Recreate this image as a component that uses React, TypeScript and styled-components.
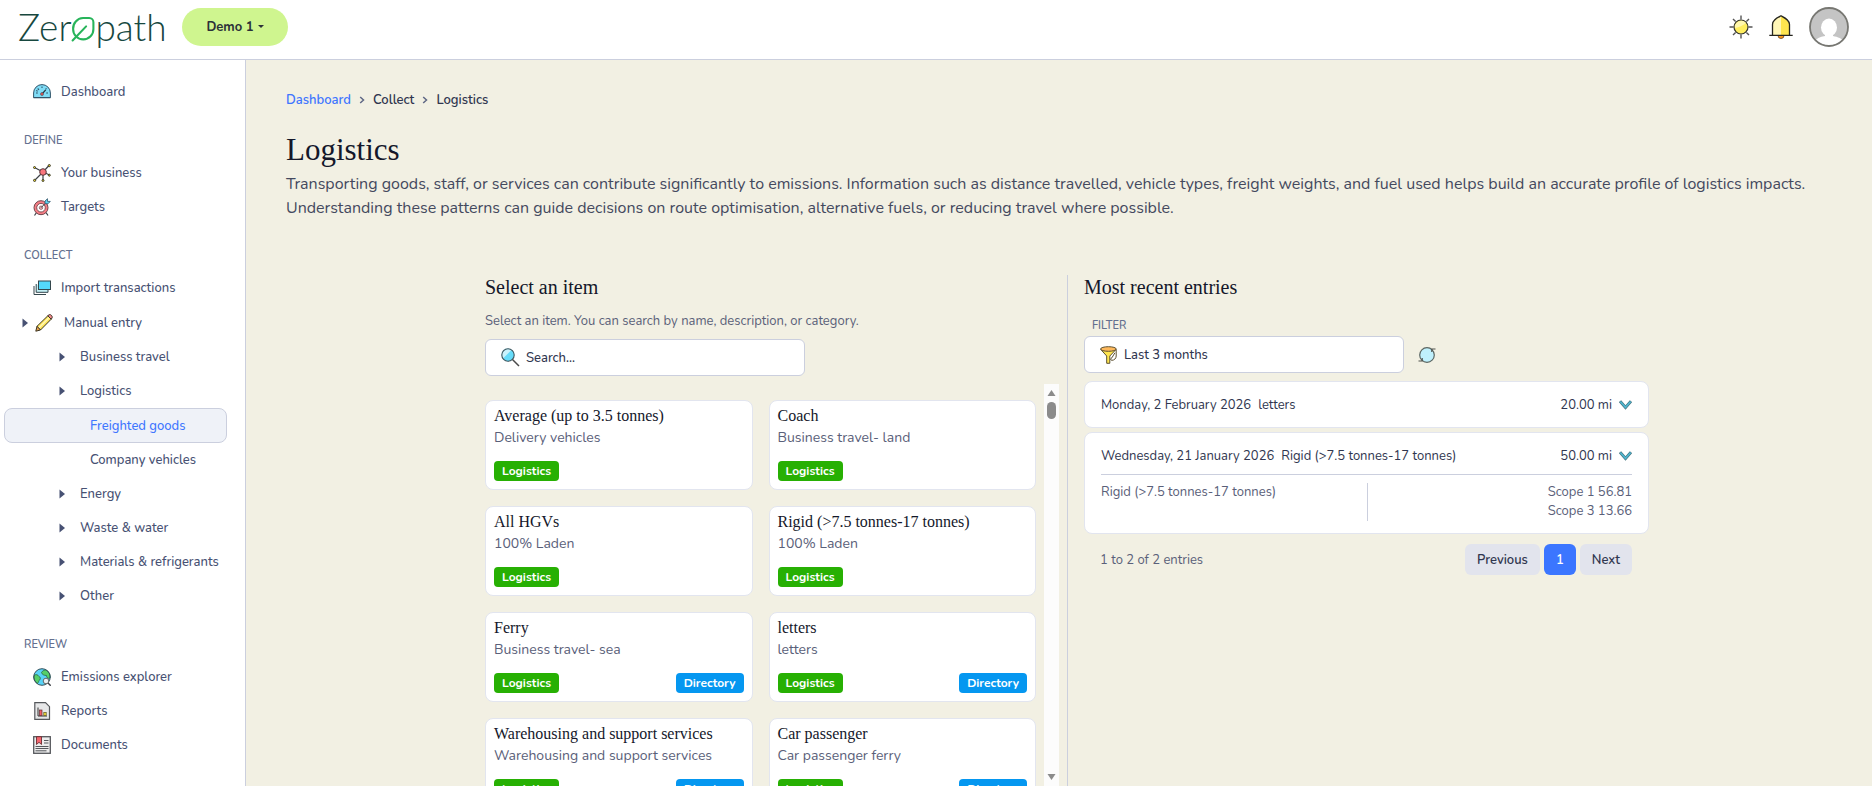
import React from 'react';
import styled, { createGlobalStyle, css } from 'styled-components';

const color = {
  page: '#f2f0e3',
  white: '#ffffff',
  line: '#cbcfde',
  cardLine: '#e2e5ef',
  ink: '#14172a',
  strong: '#30364f',
  body: '#44495e',
  muted: '#5a6079',
  nav: '#475173',
  navTitle: '#64708f',
  link: '#3f76ff',
  lime: '#cff58f',
  green: '#27b003',
  blue: '#0597f0',
};

const sans = `Nunito, Roboto, sans-serif`;
const serif = `"Times New Roman", "Liberation Serif", serif`;

const GlobalStyle = createGlobalStyle`
  *, *::before, *::after { box-sizing: border-box; }
  body { margin: 0; background: ${color.page}; color: ${color.body}; font: 400 13px/20px ${sans}; }
  h1, h2, h3, p, ul { margin: 0; padding: 0; font-weight: 400; }
  ul { list-style: none; }
  button, input, select { font: inherit; color: inherit; }
  button { border: 0; background: none; padding: 0; cursor: pointer; }
  a { color: inherit; text-decoration: none; }
  svg { display: block; flex: none; }
`;

/* ---------- shell ---------- */

const Shell = styled.div`
  display: flex;
  flex-direction: column;
  height: 100vh;
`;

const TopBar = styled.header`
  display: flex;
  align-items: center;
  flex: none;
  height: 60px;
  padding: 0 23px 6px 18px;
  background: ${color.white};
  border-bottom: 1px solid ${color.line};
`;

const Logo = styled.a`
  display: flex;
  align-items: center;
  width: 145px;
  margin-right: 19px;
  color: #17483f;
  font: 300 37px/46px Lato, sans-serif;
  svg { margin-top: 4px; }
`;

const AccountButton = styled.button`
  display: flex;
  align-items: center;
  justify-content: center;
  gap: 4px;
  width: 106px;
  height: 38px;
  border-radius: 19px;
  background: ${color.lime};
  color: #2b3038;
  font-weight: 700;
`;

const Caret = styled.span`
  border: 3px solid transparent;
  border-top-color: currentColor;
  border-bottom: 0;
`;

const TopActions = styled.div`
  display: flex;
  align-items: center;
  gap: 16px;
  margin-left: auto;
`;

const Body = styled.div`
  display: flex;
  flex: 1;
  min-height: 0;
`;

/* ---------- sidebar ---------- */

const Sidebar = styled.nav`
  flex: none;
  width: 246px;
  padding: 15px 18px 0 4px;
  overflow: hidden;
  background: ${color.white};
  border-right: 1px solid ${color.line};
`;

const NavTitle = styled.h2`
  margin: 23px 0 6px;
  padding-left: 20px;
  color: ${color.navTitle};
  font: 600 11px/18px ${sans};
  text-transform: uppercase;
`;

const rowStyle = css`
  display: flex;
  align-items: center;
  width: 100%;
  height: 34px;
  border-radius: 8px;
  color: ${color.nav};
  font-weight: 500;
  white-space: nowrap;
`;

const NavLink = styled.a`
  ${rowStyle}
  gap: 10px;
  padding-left: 29px;
`;

const GroupButton = styled.button`
  ${rowStyle}
  height: 35px;
  gap: 6px;
  padding-left: 18px;
  svg + svg { margin-right: 5px; }
`;

const SubButton = styled.button`
  ${rowStyle}
  gap: 14px;
  padding-left: 55px;
`;

const LeafLink = styled.a<{ $active?: boolean }>`
  ${rowStyle}
  padding-left: 86px;
  ${(p) =>
    p.$active &&
    css`
      height: 35px;
      padding-left: 85px;
      border: 1px solid ${color.line};
      background: #eff2f8;
      color: ${color.link};
    `}
`;

/* ---------- page head ---------- */

const Main = styled.main`
  display: flex;
  flex-direction: column;
  flex: 1;
  min-width: 0;
  padding: 30px 40px 0;
`;

const Crumbs = styled.nav`
  display: flex;
  align-items: center;
  gap: 8px;
  color: ${color.strong};
  font-weight: 600;
  a { color: ${color.link}; }
`;

const PageTitle = styled.h1`
  margin-top: 20px;
  color: ${color.ink};
  font: 400 31px/40px ${serif};
`;

const Lead = styled.p`
  margin-top: 2px;
  font-size: 16px;
  line-height: 24px;
`;

const Columns = styled.div`
  display: grid;
  grid-template-columns: 1fr 1fr;
  flex: 1;
  min-height: 0;
  width: 100%;
  max-width: 1180px;
  margin: 55px auto 0;
  padding-left: 16px;
`;

const Picker = styled.section`
  display: flex;
  flex-direction: column;
  min-height: 0;
  padding-right: 8px;
`;

const Recent = styled.section`
  padding-left: 16px;
  border-left: 1px solid ${color.line};
`;

const SectionTitle = styled.h2`
  color: ${color.ink};
  font: 400 20px/24px ${serif};
`;

const Hint = styled.p`
  margin: 12px 0 8px;
  color: ${color.muted};
`;

const Field = styled.label`
  display: flex;
  align-items: center;
  flex: none;
  gap: 6px;
  width: 320px;
  height: 37px;
  padding: 0 15px;
  border: 1px solid ${color.line};
  border-radius: 6px;
  background: ${color.white};
  color: ${color.strong};
  input, select {
    flex: 1;
    min-width: 0;
    padding: 0;
    border: 0;
    outline: 0;
    background: transparent;
    font-weight: 500;
    appearance: none;
  }
  input::placeholder { color: ${color.strong}; opacity: 1; }
`;

/* ---------- item list ---------- */

const ListFrame = styled.div`
  display: flex;
  flex: 1;
  gap: 8px;
  min-height: 0;
  margin-top: 8px;
`;

const ItemGrid = styled.ul`
  display: grid;
  grid-template-columns: 1fr 1fr;
  grid-auto-rows: max-content;
  gap: 16px;
  flex: 1;
  padding-top: 16px;
  overflow-y: auto;
  scrollbar-width: none;
`;

const ItemCard = styled.li`
  padding: 4px 8px 8px;
  border: 1px solid ${color.cardLine};
  border-radius: 8px;
  background: ${color.white};
  h3 { color: ${color.ink}; font: 400 16px/22px ${serif}; }
  p { color: ${color.muted}; font-size: 14px; line-height: 22px; }
`;

const Tags = styled.div`
  display: flex;
  justify-content: space-between;
  margin-top: 12px;
`;

const Tag = styled.span<{ $tone: 'green' | 'blue' }>`
  padding: 0 8px;
  border-radius: 4px;
  background: ${(p) => color[p.$tone]};
  color: ${color.white};
  font: 700 12px/20px ${sans};
`;

const ScrollTrack = styled.div`
  display: flex;
  flex-direction: column;
  align-items: center;
  flex: none;
  width: 15px;
  padding: 6px 0;
  background: #fcfcfc;
`;

const ScrollThumb = styled.div`
  width: 9px;
  height: 17px;
  margin: 6px 0 auto;
  border-radius: 5px;
  background: #8b8b8b;
`;

/* ---------- recent entries ---------- */

const FilterLabel = styled.label`
  display: block;
  margin: 18px 0 1px 8px;
  color: ${color.navTitle};
  font: 600 11px/18px ${sans};
  text-transform: uppercase;
`;

const FilterRow = styled.div`
  display: flex;
  align-items: center;
  gap: 14px;
  margin-bottom: 8px;
`;

const EntryList = styled.ul`
  display: grid;
  gap: 4px;
`;

const EntryCard = styled.li`
  padding: 12px 16px;
  border: 1px solid ${color.cardLine};
  border-radius: 8px;
  background: ${color.white};
`;

const EntryHead = styled.div`
  display: flex;
  align-items: center;
  gap: 7px;
  height: 21px;
  color: ${color.strong};
  strong { margin-left: auto; font-weight: 400; }
`;

const EntryDetail = styled.div`
  display: grid;
  grid-template-columns: 1fr 1fr;
  margin-top: 8px;
  padding: 8px 0 0;
  border-top: 1px solid ${color.line};
  color: ${color.muted};
  line-height: 19px;
`;

const Scopes = styled.ul`
  border-left: 1px solid ${color.line};
  text-align: right;
`;

const Pager = styled.footer`
  display: flex;
  align-items: center;
  gap: 4px;
  padding: 10px 17px 10px 16px;
  span { margin-right: auto; color: ${color.muted}; }
`;

const PageButton = styled.button<{ $current?: boolean }>`
  height: 31px;
  padding: 0 12px;
  border-radius: 6px;
  background: ${(p) => (p.$current ? '#3b76ff' : '#e2e4ed')};
  color: ${(p) => (p.$current ? color.white : color.strong)};
  font-weight: 600;
`;

/* ---------- drawings ---------- */

const dark = '#3b3f45';

const LeafMark = () => (
  <svg width="24" height="26" viewBox="0 0 23 25" fill="none" stroke="#27b45a" strokeWidth="2" strokeLinecap="round">
    <path d="M11.500 2H17.500A4 4 0 0 1 21.500 6V12.500A9.700 9.700 0 0 1 11.800 22.500A9.700 9.700 0 0 1 2 12.500A10 10 0 0 1 11.500 2Z" />
    <path d="M1.500 23.500L14.500 10" />
  </svg>
);

const Sun = () => (
  <svg width="24" height="24" viewBox="0 0 24 24">
    <g stroke="#555" strokeWidth="1.4">
      <path d="M12 .5v4M12 19.500v4M.5 12h4M19.500 12h4M4 4l2.600 2.600M17.400 17.400L20 20M4 20l2.600-2.600M17.400 6.600L20 4" />
    </g>
    <circle cx="12" cy="12" r="7" fill="#ffee5f" stroke="#33332b" strokeWidth="1.2" />
    <path d="M6 13a6.300 6.300 0 0 1 11-5A22 22 0 0 1 6 13Z" fill="#fff7ae" />
  </svg>
);

const Bell = () => (
  <svg width="24" height="24" viewBox="0 0 24 24">
    <path d="M9 20.500a3 3 0 0 0 6 0Z" fill="#ff9b1e" stroke="#66401a" strokeWidth=".8" />
    <path d="M3.500 20.300V9.500C3.500 5 8 3 12 .8C16 3 20.500 5 20.500 9.500V20.300Z" fill="#ffe54e" />
    <path d="M3.500 20.300V9.500C3.500 5 8 3 12 .8V20.300Z" fill="#fff6b6" />
    <path d="M.3 20.300H23.700M3.500 20V9.500C3.500 5 8 3 12 .8C16 3 20.500 5 20.500 9.500V20" fill="none" stroke="#25251f" strokeWidth="1.300" />
  </svg>
);

const Avatar = () => (
  <svg width="40" height="40" viewBox="0 0 40 40">
    <clipPath id="face"><circle cx="20" cy="20" r="18.500" /></clipPath>
    <circle cx="20" cy="20" r="19" fill="#c4c4c4" />
    <g clipPath="url(#face)" fill="#fff">
      <ellipse cx="20" cy="20.500" rx="8" ry="9" />
      <path d="M16 26h8v3c5 1 9 2.500 11 6v5H5v-5c2-3.500 6-5 11-6Z" />
    </g>
    <circle cx="20" cy="20" r="19" fill="none" stroke="#777772" strokeWidth="1.800" />
  </svg>
);

const Gauge = () => (
  <svg width="18" height="18" viewBox="0 0 18 18">
    <path d="M.6 14.600V10a8.400 8.400 0 0 1 16.800 0v4.600Z" fill="#7fdcf6" stroke="#31546a" />
    <path d="M3 10h1.800M13.200 10H15M4.700 5.500L6 6.800M9 3.500V5M13.500 5.300l-1 1M3.200 7.500l1.500.7" stroke="#31546a" strokeWidth="1.100" />
    <path d="M9 11L12.700 6.800" stroke="#24333d" strokeWidth="1.200" />
    <circle cx="9" cy="11" r="1.500" fill="#e8524d" stroke="#31546a" strokeWidth=".6" />
    <path d="M.6 14.600H17.400" stroke="#31546a" strokeWidth="1.200" />
  </svg>
);

const Network = () => (
  <svg width="18" height="18" viewBox="0 0 18 18">
    <path d="M10 8L1.500 3.500M10 8L16 1.500M10 8L16.500 11M10 8V16M10 8L1.500 16.500" stroke={dark} strokeWidth="1.200" />
    <circle cx="10" cy="8" r="3.300" fill="#f9757d" stroke="#59393d" />
    <g fill="#e9d636" stroke="#302f22" strokeWidth=".9">
      <circle cx="1.500" cy="3.500" r="1" /><circle cx="16.300" cy="1.600" r="1.100" />
      <circle cx="16.300" cy="11.200" r="1" /><circle cx="10" cy="16.500" r="1" /><circle cx="1.600" cy="16.400" r="1.100" />
    </g>
  </svg>
);

const Target = () => (
  <svg width="18" height="18" viewBox="0 0 18 18">
    <path d="M3.500 14.500L1.500 17.500M13 14.500l2 3" stroke={dark} strokeWidth="1.200" />
    <circle cx="8" cy="9.700" r="7" fill="#f77d85" stroke="#70474c" />
    <circle cx="8" cy="9.700" r="4.300" fill="#fff" stroke="#70474c" strokeWidth=".9" />
    <circle cx="8" cy="9.700" r="1.700" fill="#f9b7bb" stroke="#70474c" strokeWidth=".7" />
    <path d="M8 9.700L13.500 4.200" stroke={dark} />
    <path d="M12 5.700V3L14.500.7V3.400H17.300L15 5.800Z" fill="#5dd5f5" stroke="#31546a" strokeWidth=".8" />
  </svg>
);

const Stack = () => (
  <svg width="18" height="18" viewBox="0 0 18 18" stroke="#34474d">
    <path d="M1 7v8.500h12" fill="none" />
    <path d="M3.200 5v8.300H15V11" fill="#c5f0f6" />
    <rect x="5.500" y="2" width="12" height="8.500" fill="#54d9fb" />
  </svg>
);

const Pencil = () => (
  <svg width="18" height="18" viewBox="0 0 18 18" stroke="#3b3524" strokeWidth="1" strokeLinejoin="round">
    <path d="M2 12.300L12.800 1.800L16.200 5.200L5.500 16Z" fill="#ffe659" />
    <path d="M3.700 14L14.300 3.500" stroke="#fff7bd" strokeWidth="1.400" />
    <path d="M2 12.300L.8 17.200L5.500 16Z" fill="#e8a14c" />
    <path d="M12.800 1.800L14 .8C15.500-.2 18 2.300 17 4L16.200 5.200Z" fill="#f58b91" />
  </svg>
);

const Globe = () => (
  <svg width="18" height="18" viewBox="0 0 18 18">
    <circle cx="9" cy="9" r="8.300" fill="#58d3f7" />
    <path d="M1 7.500C2.500 6 5 6.500 6 8.500C8 9.500 7.500 11.500 6 12.500C5.500 14 5 15 4.500 15.500C1.500 13.500.5 10.500 1 7.500ZM8.500 4.500C9.500 2.500 12 1.800 13 2C16 3.500 17.500 7 17 10C15 11 13.500 9.500 13.500 7.500C11 7.500 9 6.500 8.500 4.500Z" fill="#55cf68" stroke="#2b6740" strokeWidth=".8" />
    <circle cx="9" cy="9" r="8.300" fill="none" stroke="#33505c" />
    <path d="M14.800 14.800L17.700 17.700" stroke={dark} strokeWidth="1.400" />
    <circle cx="13" cy="13" r="2.800" fill="#e9eff0" stroke="#666" />
  </svg>
);

const Report = () => (
  <svg width="18" height="18" viewBox="0 0 18 18" stroke="#55585c">
    <path d="M1.800.7H12.500L16.500 4.700V17.300H1.800Z" fill="#e6e7e8" strokeWidth="1.200" />
    <path d="M5 5.500V14h9" fill="none" stroke="#333" />
    <rect x="6.500" y="8" width="2.500" height="5.500" fill="#ef5a63" stroke="#642b30" strokeWidth=".7" />
    <rect x="10.800" y="10.500" width="2.400" height="3" fill="#f2dc3b" stroke="#5c5420" strokeWidth=".7" />
  </svg>
);

const Documents = () => (
  <svg width="18" height="18" viewBox="0 0 18 18" stroke="#55585c">
    <rect x=".7" y=".7" width="16.600" height="16.600" fill="#ececec" strokeWidth="1.300" />
    <path d="M11 4.500h4.500M11 7h4.500M2.500 10.500h13M2.500 12.500h13M2.500 14.800h11" fill="none" />
    <path d="M3.500.7H8.500V8.500L6 6.300L3.500 8.500Z" fill="#f4646d" stroke="#6b2e33" strokeWidth=".9" />
  </svg>
);

const Glass = () => (
  <svg width="19" height="19" viewBox="0 0 19 19">
    <circle cx="7" cy="7" r="6.200" fill="#66dcfa" />
    <path d="M2 10.500A6 6 0 0 1 10.500 2Z" fill="#c9f3fd" />
    <circle cx="7" cy="7" r="6.200" fill="none" stroke="#3d555d" strokeWidth="1.100" />
    <path d="M11.500 11.500L18 18" stroke="#4a4a4a" strokeWidth="1.500" />
  </svg>
);

const Funnel = () => (
  <svg width="18" height="18" viewBox="0 0 18 18" stroke="#5c5031">
    <path d="M.8 3.500L6.700 10v7.300H9.800V10L16 3.500Z" fill="#ffe64f" />
    <ellipse cx="8.400" cy="3" rx="7.800" ry="2.300" fill="#ffb95c" />
    <path d="M16.200 3.500V10c0 2.500-2 4.300-4.300 4.300-1.700 0-1.700-2 0-2.500l3-5" fill="none" />
  </svg>
);

const Refresh = () => (
  <svg width="18" height="18" viewBox="0 0 18 18" fill="none" stroke="#5b6662" strokeWidth="1.200">
    <circle cx="9" cy="9" r="7.300" fill="#bff0fc" />
    <path d="M13.800 6V3H17.500M4.200 12V15H.5" stroke="#4e504d" />
  </svg>
);

const Triangle = () => (
  <svg width="7" height="10" viewBox="0 0 7 10"><path d="M.5.5V9.500L6 5Z" fill={color.nav} /></svg>
);

const CrumbArrow = () => (
  <svg width="6" height="8" viewBox="0 0 6 8" fill="none" stroke="#5f6785" strokeWidth="1.500"><path d="M1.200 1L4.500 4L1.200 7" /></svg>
);

const Expand = () => (
  <svg width="13" height="10" viewBox="0 0 13 10" fill="none">
    <path d="M1 1.200L6.500 7.500L12 1.200" stroke="#44707c" strokeWidth="3" />
    <path d="M1.300 1.500L6.500 7.400L11.700 1.500" stroke="#4fb4cd" strokeWidth="1.800" />
  </svg>
);

const ScrollArrow = ({ down = false }: { down?: boolean }) => (
  <svg width="9" height="6" viewBox="0 0 9 6"><path d={down ? 'M.5 0H8.500L4.500 6Z' : 'M.5 6H8.500L4.500 0Z'} fill="#8b8b8b" /></svg>
);

/* ---------- data ---------- */

const items = [
  { name: 'Average (up to 3.5 tonnes)', detail: 'Delivery vehicles' },
  { name: 'Coach', detail: 'Business travel- land' },
  { name: 'All HGVs', detail: '100% Laden' },
  { name: 'Rigid (>7.5 tonnes-17 tonnes)', detail: '100% Laden' },
  { name: 'Ferry', detail: 'Business travel- sea', directory: true },
  { name: 'letters', detail: 'letters', directory: true },
  { name: 'Warehousing and support services', detail: 'Warehousing and support services', directory: true },
  { name: 'Car passenger', detail: 'Car passenger ferry', directory: true },
];

const entries = [
  { date: 'Monday, 2 February 2026', item: 'letters', amount: '20.00 mi', scopes: [] as string[] },
  {
    date: 'Wednesday, 21 January 2026',
    item: 'Rigid (>7.5 tonnes-17 tonnes)',
    amount: '50.00 mi',
    scopes: ['Scope 1 56.81', 'Scope 3 13.66'],
  },
];

const SubGroup = ({ label }: { label: string }) => (
  <SubButton type="button"><Triangle />{label}</SubButton>
);

export default function App() {
  return (
    <Shell>
      <GlobalStyle />
      <TopBar>
        <Logo href="#"><span>Zer</span><LeafMark /><span>path</span></Logo>
        <AccountButton type="button">Demo 1<Caret /></AccountButton>
        <TopActions>
          <button type="button" aria-label="Theme"><Sun /></button>
          <button type="button" aria-label="Notifications"><Bell /></button>
          <button type="button" aria-label="Profile"><Avatar /></button>
        </TopActions>
      </TopBar>
      <Body>
        <Sidebar>
          <NavLink href="#"><Gauge />Dashboard</NavLink>
          <NavTitle>Define</NavTitle>
          <NavLink href="#"><Network />Your business</NavLink>
          <NavLink href="#"><Target />Targets</NavLink>
          <NavTitle>Collect</NavTitle>
          <NavLink href="#"><Stack />Import transactions</NavLink>
          <GroupButton type="button" aria-expanded="true"><Triangle /><Pencil />Manual entry</GroupButton>
          <SubGroup label="Business travel" />
          <SubGroup label="Logistics" />
          <LeafLink href="#" $active>Freighted goods</LeafLink>
          <LeafLink href="#">Company vehicles</LeafLink>
          <SubGroup label="Energy" />
          <SubGroup label="Waste & water" />
          <SubGroup label="Materials & refrigerants" />
          <SubGroup label="Other" />
          <NavTitle>Review</NavTitle>
          <NavLink href="#"><Globe />Emissions explorer</NavLink>
          <NavLink href="#"><Report />Reports</NavLink>
          <NavLink href="#"><Documents />Documents</NavLink>
        </Sidebar>
        <Main>
          <Crumbs>
            <a href="#">Dashboard</a><CrumbArrow /><span>Collect</span><CrumbArrow /><span>Logistics</span>
          </Crumbs>
          <PageTitle>Logistics</PageTitle>
          <Lead>
            Transporting goods, staff, or services can contribute significantly to emissions. Information such as
            distance travelled, vehicle types, freight weights, and fuel used helps build an accurate profile of
            logistics impacts. Understanding these patterns can guide decisions on route optimisation, alternative
            fuels, or reducing travel where possible.
          </Lead>
          <Columns>
            <Picker>
              <SectionTitle>Select an item</SectionTitle>
              <Hint>Select an item. You can search by name, description, or category.</Hint>
              <Field><Glass /><input type="text" aria-label="Search items" placeholder="Search..." /></Field>
              <ListFrame>
                <ItemGrid>
                  {items.map((item) => (
                    <ItemCard key={item.name}>
                      <h3>{item.name}</h3>
                      <p>{item.detail}</p>
                      <Tags>
                        <Tag $tone="green">Logistics</Tag>
                        {item.directory && <Tag $tone="blue">Directory</Tag>}
                      </Tags>
                    </ItemCard>
                  ))}
                </ItemGrid>
                <ScrollTrack aria-hidden="true"><ScrollArrow /><ScrollThumb /><ScrollArrow down /></ScrollTrack>
              </ListFrame>
            </Picker>
            <Recent>
              <SectionTitle>Most recent entries</SectionTitle>
              <FilterLabel htmlFor="period">Filter</FilterLabel>
              <FilterRow>
                <Field as="div">
                  <Funnel />
                  <select id="period"><option>Last 3 months</option></select>
                </Field>
                <button type="button" aria-label="Refresh"><Refresh /></button>
              </FilterRow>
              <EntryList>
                {entries.map((entry) => (
                  <EntryCard key={entry.date}>
                    <EntryHead>
                      <span>{entry.date}</span>
                      <span>{entry.item}</span>
                      <strong>{entry.amount}</strong>
                      <button type="button" aria-label="Toggle details"><Expand /></button>
                    </EntryHead>
                    {entry.scopes.length > 0 && (
                      <EntryDetail>
                        <span>{entry.item}</span>
                        <Scopes>{entry.scopes.map((scope) => <li key={scope}>{scope}</li>)}</Scopes>
                      </EntryDetail>
                    )}
                  </EntryCard>
                ))}
              </EntryList>
              <Pager>
                <span>1 to 2 of 2 entries</span>
                <PageButton type="button">Previous</PageButton>
                <PageButton type="button" $current>1</PageButton>
                <PageButton type="button">Next</PageButton>
              </Pager>
            </Recent>
          </Columns>
        </Main>
      </Body>
    </Shell>
  );
}
